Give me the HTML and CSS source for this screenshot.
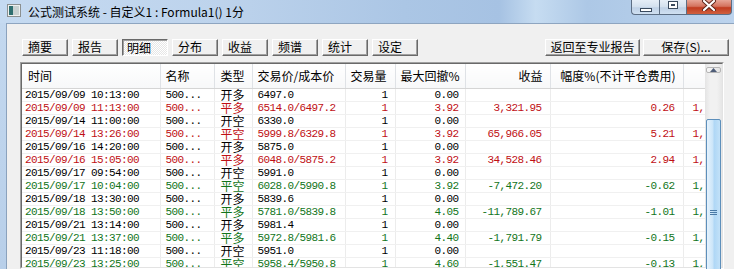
FILE: index.html
```html
<!DOCTYPE html>
<html lang="zh-CN">
<head>
  <meta charset="UTF-8" />
  <title>公式测试系统</title>
  <link rel="stylesheet" href="styles.css">
</head>
<body>
<div class="window">
  <div class="titlebar">
    <svg class="app-icon" width="14" height="13" viewBox="0 0 14 13">
      <rect x="0.5" y="0.5" width="13" height="12" fill="#eef0f0" stroke="#8c9090"/>
      <rect x="2" y="2" width="4" height="9" fill="#2f6f70"/>
      <rect x="6" y="2" width="6" height="9" fill="#c9d2d2"/>
    </svg>
    <span class="title">公式测试系统 - 自定义1 : Formula1() 1分</span>
    <div class="caption">
      <div class="cap min"><span class="min-glyph"></span></div>
      <div class="cap max"><span class="max-glyph"></span></div>
      <div class="cap close">
        <svg width="16" height="11" viewBox="0 0 16 11">
          <path d="M3 1 L13 10 M13 1 L3 10" stroke="#5b2418" stroke-width="4" stroke-linecap="round"/>
          <path d="M3 1 L13 10 M13 1 L3 10" stroke="#fff" stroke-width="2.2" stroke-linecap="round"/>
        </svg>
      </div>
    </div>
  </div>

  <div class="main">
    <div class="frame"></div>
    <div class="client">
      <div class="toolbar">
        <div class="tabs">
          <div class="btn tab">摘要</div>
          <div class="btn tab">报告</div>
          <div class="btn tab pressed">明细</div>
          <div class="btn tab">分布</div>
          <div class="btn tab">收益</div>
          <div class="btn tab">频谱</div>
          <div class="btn tab">统计</div>
          <div class="btn tab">设定</div>
        </div>
        <div class="actions">
          <div class="btn back">返回至专业报告</div>
          <div class="btn save">保存(S)...</div>
        </div>
      </div>

      <div class="grid">
        <div class="grid-inner">
          <div class="grid-view">
            <table>
              <colgroup>
                <col style="width:138px"><col style="width:54px"><col style="width:38px">
                <col style="width:93px"><col style="width:50px"><col style="width:70px">
                <col style="width:85px"><col style="width:133px"><col style="width:80px">
              </colgroup>
              <thead>
                <tr>
                  <th class="h-time">时间</th>
                  <th>名称</th>
                  <th class="h-type">类型</th>
                  <th>交易价/成本价</th>
                  <th>交易量</th>
                  <th>最大回撤%</th>
                  <th class="hr">收益</th>
                  <th class="hr">幅度%(不计平仓费用)</th>
                  <th></th>
                </tr>
              </thead>
              <tbody id="rows"></tbody>
            </table>
          </div>
          <div class="vscroll">
            <div class="sb-up">
              <svg width="7" height="4" viewBox="0 0 7 4"><path d="M0 4 L3.5 0 L7 4 Z" fill="#4e5d78"/></svg>
            </div>
            <div class="sb-thumb"><span class="grip"></span></div>
          </div>
        </div>
      </div>
    </div>
  </div>
</div>

<script>
  const trades = [
    ['2015/09/09 10:13:00', '开多', '6497.0', '0.00', '', '', '', ''],
    ['2015/09/09 11:13:00', '平多', '6514.0/6497.2', '3.92', '3,321.95', '0.26', '1,', 'up'],
    ['2015/09/14 11:00:00', '开空', '6330.0', '0.00', '', '', '', ''],
    ['2015/09/14 13:26:00', '平空', '5999.8/6329.8', '3.92', '65,966.05', '5.21', '1,', 'up'],
    ['2015/09/16 14:20:00', '开多', '5875.0', '0.00', '', '', '', ''],
    ['2015/09/16 15:05:00', '平多', '6048.0/5875.2', '3.92', '34,528.46', '2.94', '1,', 'up'],
    ['2015/09/17 09:54:00', '开空', '5991.0', '0.00', '', '', '', ''],
    ['2015/09/17 10:04:00', '平空', '6028.0/5990.8', '3.92', '-7,472.20', '-0.62', '1,', 'dn'],
    ['2015/09/18 13:30:00', '开多', '5839.6', '0.00', '', '', '', ''],
    ['2015/09/18 13:50:00', '平多', '5781.0/5839.8', '4.05', '-11,789.67', '-1.01', '1,', 'dn'],
    ['2015/09/21 13:14:00', '开多', '5981.4', '0.00', '', '', '', ''],
    ['2015/09/21 13:37:00', '平多', '5972.8/5981.6', '4.40', '-1,791.79', '-0.15', '1,', 'dn'],
    ['2015/09/23 11:18:00', '开空', '5951.0', '0.00', '', '', '', ''],
    ['2015/09/23 13:25:00', '平空', '5958.4/5950.8', '4.60', '-1,551.47', '-0.13', '1,', 'dn']
  ];

  const tbody = document.getElementById('rows');
  trades.forEach(t => {
    const tr = document.createElement('tr');
    if (t[7]) tr.className = t[7];
    tr.innerHTML =
      `<td class="n c-time">${t[0]}</td>` +
      `<td class="n">500...</td>` +
      `<td class="t">${t[1]}</td>` +
      `<td class="n">${t[2]}</td>` +
      `<td class="n r r-qty">1</td>` +
      `<td class="n r r-dd">${t[3]}</td>` +
      `<td class="n r">${t[4]}</td>` +
      `<td class="n r">${t[5]}</td>` +
      `<td class="n c-last">${t[6]}</td>`;
    tbody.appendChild(tr);
  });
</script>
</body>
</html>
```

FILE: styles.css
```css
* {
  box-sizing: border-box;
}
body {
  margin: 0;
  width: 734px;
  height: 269px;
  overflow: hidden;
  font-family: "Noto Sans CJK SC", sans-serif;
  font-size: 12px;
  color: #000;
  background: #f0f0f0;
}
.window {
  display: flex;
  flex-direction: column;
  height: 269px;
}

/* title bar */
.titlebar {
  height: 23px;
  flex-shrink: 0;
  display: flex;
  align-items: flex-start;
  background: linear-gradient(90deg, #c5daf1 0%, #bdd3ec 30%, #abc6e5 55%, #a6c2e3 68%, #c6dcf1 73%, #adc8e6 80%, #bcd3ed 100%);
}
.app-icon {
  margin: 4px 0 0 7px;
  flex-shrink: 0;
}
.title {
  margin: 3px 0 0 7px;
  line-height: 17px;
  font-size: 12px;
  white-space: nowrap;
}
.caption {
  margin-left: auto;
  margin-right: 2px;
  display: flex;
}
.cap {
  height: 15px;
  border: 1px solid #5d6e84;
  border-top: none;
  display: flex;
  align-items: center;
  justify-content: center;
}
.cap.min {
  width: 28px;
  border-right: none;
  border-radius: 0 0 0 4px;
  background: linear-gradient(#e6eef7, #d3e0ee 50%, #bfd1e6 55%, #d0e0f1);
}
.cap.max {
  width: 27px;
  border-right: none;
  background: linear-gradient(#e6eef7, #d3e0ee 50%, #bfd1e6 55%, #d0e0f1);
}
.cap.close {
  width: 46px;
  border-radius: 0 0 4px 0;
  background: linear-gradient(#e7a596, #d4735e 45%, #c13c20 55%, #d0603f);
  align-items: flex-start;
}
.min-glyph {
  width: 12px;
  height: 4px;
  margin-top: 5px;
  border: 1px solid #3a4a5e;
  background: #fff;
}
.max-glyph {
  width: 10px;
  height: 8px;
  margin-bottom: 4px;
  border: 1px solid #3a4a5e;
  background: #fff;
  box-shadow: inset 0 0 0 2px #fff, inset 0 0 0 3px #3a4a5e;
}

/* window body */
.main {
  flex: 1;
  display: flex;
  min-height: 0;
}
.frame {
  width: 7px;
  flex-shrink: 0;
  background: linear-gradient(#c3d8ef, #b8cfe9);
  border-right: 1px solid #8ba2bd;
}
.client {
  flex: 1;
  display: flex;
  flex-direction: column;
  border-top: 1px solid #8ea5c0;
  background: #f0f0f0;
  min-width: 0;
}
.toolbar {
  display: flex;
  justify-content: space-between;
  margin-top: 15px;
  padding: 0 5px 0 15px;
}
.tabs, .actions {
  display: flex;
  gap: 4px;
}
.actions {
  gap: 3px;
}
.btn {
  height: 17px;
  line-height: 14px;
  font-size: 12px;
  background: #f0f0f0;
  border: 1px solid;
  border-color: #fff #696969 #696969 #fff;
  box-shadow: inset -1px -1px #a0a0a0;
  white-space: nowrap;
}
.tab {
  width: 46px;
  padding-left: 5px;
}
.tab.pressed {
  padding-left: 4px;
  padding-top: 1px;
  border-color: #696969 #fff #fff #696969;
  box-shadow: inset 1px 1px #a0a0a0;
  background: repeating-conic-gradient(#fff 0 25%, #e6e6e6 0 50%) 0 0 / 2px 2px;
}
.back {
  width: 95px;
  text-align: center;
}
.save {
  width: 86px;
  text-align: center;
}

/* grid */
.grid {
  margin: 6px 10px 0 13px;
  flex: 1;
  border: 1px solid;
  border-color: #a0a0a0 #fff #fff #a0a0a0;
  min-height: 0;
}
.grid-inner {
  height: 100%;
  display: flex;
  border: 1px solid;
  border-color: #696969 #e3e3e3 #e3e3e3 #696969;
  background: #fff;
}
.grid-view {
  flex: 1;
  overflow: hidden;
  min-width: 0;
}
table {
  border-collapse: collapse;
  table-layout: fixed;
  width: 741px;
}
th {
  height: 24px;
  padding: 0 0 0 5px;
  font-weight: normal;
  text-align: left;
  white-space: nowrap;
  overflow: hidden;
  border-right: 1px solid #dfe2e6;
  border-bottom: 1px solid #d5d5d5;
  background: linear-gradient(#fff, #f7f8f9);
}
th.h-time {
  padding-left: 6px;
}
th.h-type {
  padding-left: 6px;
}
th.hr {
  text-align: right;
  padding: 0 7px 0 0;
}
td {
  height: 13px;
  padding: 0 0 0 5px;
  line-height: 12px;
  white-space: nowrap;
  overflow: hidden;
  border-right: 1px solid #ececec;
  border-bottom: 1px solid #f0f0f0;
}
td.n {
  font-family: "Liberation Mono", monospace;
  font-size: 11px;
  letter-spacing: -0.6px;
}
td.t {
  font-size: 12px;
  line-height: 12px;
  padding-left: 6px;
  overflow: visible;
}
td.c-time {
  padding-left: 3px;
}
td.r {
  text-align: right;
  padding: 0 8px 0 0;
}
td.r-qty {
  padding-right: 7px;
}
td.r-dd {
  padding-right: 6px;
}
td.c-last {
  padding-left: 9px;
}
tr.up td {
  color: #c00f14;
}
tr.dn td {
  color: #12751a;
}

/* scrollbar */
.vscroll {
  width: 17px;
  flex-shrink: 0;
  display: flex;
  flex-direction: column;
  align-items: center;
  background: linear-gradient(90deg, #e4e4e4, #f1f1f1 30%, #f1f1f1 70%, #e6e6e6);
}
.sb-up {
  width: 15px;
  height: 15px;
  margin-top: 3px;
  border: 1px solid #b5b5b5;
  border-radius: 2px;
  background: linear-gradient(90deg, #f7f7f7, #e4e4e4);
  display: flex;
  align-items: center;
  justify-content: center;
}
.sb-thumb {
  width: 15px;
  height: 186px;
  flex-shrink: 0;
  margin-top: 46px;
  border: 1px solid #5d8fbb;
  border-radius: 2px;
  background: linear-gradient(90deg, #e6f3fd, #cbe5f9 45%, #afd7f6 55%, #c2e1f8);
  display: flex;
  align-items: center;
  justify-content: center;
}
.grip {
  width: 7px;
  height: 5px;
  border-top: 1px solid #4a7aa6;
  border-bottom: 1px solid #4a7aa6;
  background: linear-gradient(transparent 1px, #4a7aa6 1px, #4a7aa6 2px, transparent 2px);
}
```
